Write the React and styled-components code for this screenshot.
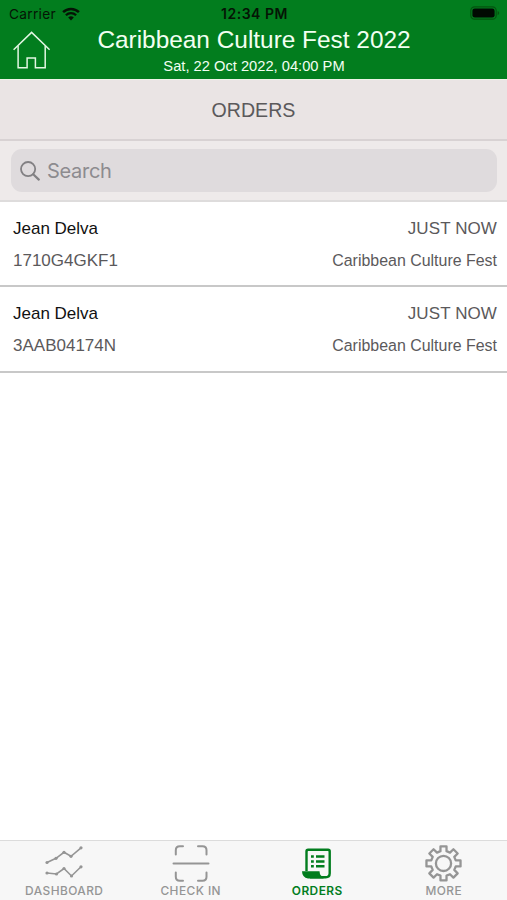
import React from "react";
import styled, { createGlobalStyle } from "styled-components";

const Colors = {
  green: "#027d1e",
  grey: "#959595",
  text: "#5b595b",
  line: "#c8c8c8",
};

const orders = [
  { name: "Jean Delva", code: "1710G4GKF1", time: "JUST NOW", event: "Caribbean Culture Fest" },
  { name: "Jean Delva", code: "3AAB04174N", time: "JUST NOW", event: "Caribbean Culture Fest" },
];

const WifiIcon = () => (
  <svg width="18" height="14" viewBox="0 0 18 14" fill="none" stroke="#051405">
    <path d="M1.1 5.1a11.4 11.4 0 0 1 15.8 0" strokeWidth="2.5" />
    <path d="M3.9 8.2a7.3 7.3 0 0 1 10.2 0" strokeWidth="2.3" />
    <path d="M9 13.4L6.2 10.6a4 4 0 0 1 5.6 0z" fill="#051405" stroke="none" />
  </svg>
);

const BatteryIcon = () => (
  <svg width="30" height="15" viewBox="0 0 30 15">
    <rect x="0.8" y="0.8" width="25.4" height="12.4" rx="3.8" fill="none" stroke="#04540f" strokeWidth="1.2" />
    <rect x="2.4" y="2.4" width="22.2" height="9.2" rx="2.4" fill="#010a02" />
    <path d="M27.6 5v4.2q1.6-.6 1.6-2.1T27.6 5z" fill="#04540f" />
  </svg>
);

const HomeIcon = () => (
  <svg width="38" height="38" viewBox="0 0 38 38" fill="none" stroke="#e3f6e3" strokeWidth="1.5">
    <path d="M.6 18.8L18.600 1.400l18 17.400" />
    <path d="M5.100 15v21.800h9V27h8.300v9.800h9.800V15" />
  </svg>
);

const SearchIcon = () => (
  <svg width="20" height="20" viewBox="0 0 20 20" fill="none" stroke="#828083" strokeWidth="1.8">
    <circle cx="8.1" cy="8.1" r="7.1" />
    <path d="M13.200 13.200l5.600 5.400" strokeWidth="2.2" strokeLinecap="round" />
  </svg>
);

const chartLines = [
  [[2, 17.5], [11, 13.3], [19, 7.3], [26, 11.3], [36, 2.8]],
  [[2, 28], [11.5, 29], [19, 23.5], [26.5, 31], [36, 21.8]],
];

const DashboardIcon = () => (
  <svg width="38" height="38" viewBox="0 0 38 38" fill="none" stroke="currentColor" strokeWidth="1.6">
    {chartLines.map((points, i) => (
      <g key={i}>
        <polyline points={points.join(" ")} />
        {points.map(([x, y]) => (
          <circle key={x} cx={x} cy={y} r="1.6" fill="currentColor" stroke="none" />
        ))}
      </g>
    ))}
  </svg>
);

const ScanIcon = () => (
  <svg width="38" height="38" viewBox="0 0 38 38" fill="none" stroke="currentColor" strokeWidth="2" strokeLinecap="round">
    <path d="M3.800 9.500V5.200q0-4 4-4H11M26 1.200h4.500q4 0 4 4v4.300M34.500 27.500v4.300q0 4-4 4H26M11 35.800H7.800q-4 0-4-4v-4.300" />
    <path d="M1.500 18.500h35" />
  </svg>
);

const OrdersIcon = () => (
  <svg width="38" height="38" viewBox="0 0 38 38" fill="none" stroke="currentColor">
    <path d="M8.500 26V6.400q0-1.600 1.600-1.600h20q1.600 0 1.600 1.600v21.800q0 4-4 4H12" strokeWidth="2.400" />
    <path d="M4 26.200h17.500q.2 2.600 1.200 4 1 1.400 2.800 1.600v1.600H10Q4.200 32.600 4 26.200z" fill="currentColor" stroke="none" />
    <path d="M13 11.500h2.800M13 16.400h2.800M13 21.300h2.800M18 11.500h8.500M18 16.400h8.500M18 21.300h8.500" strokeWidth="2.500" />
  </svg>
);

// Eight teeth around the hub, four corners for each tooth
const gearPoints = Array.from({ length: 8 }, (_, i) =>
  [[-14, 12.6], [-10, 17.3], [10, 17.3], [14, 12.6]].map(([offset, radius]) => {
    const angle = ((i * 45 + offset) * Math.PI) / 180;
    return `${(18.5 + radius * Math.sin(angle)).toFixed(2)},${(18.4 - radius * Math.cos(angle)).toFixed(2)}`;
  }).join(" ")
).join(" ");

const MoreIcon = () => (
  <svg width="38" height="38" viewBox="0 0 38 38" fill="none" stroke="currentColor" strokeWidth="2.3" strokeLinejoin="round">
    <polygon points={gearPoints} />
    <circle cx="18.5" cy="18.4" r="7.6" />
  </svg>
);

const tabs = [
  { label: "DASHBOARD", Icon: DashboardIcon },
  { label: "CHECK IN", Icon: ScanIcon },
  { label: "ORDERS", Icon: OrdersIcon, active: true },
  { label: "MORE", Icon: MoreIcon },
];

const App = () => {
  return (
    <Screen>
      <GlobalStyle />
      <Header>
        <StatusBar>
          <Carrier>
            Carrier
            <WifiIcon />
          </Carrier>
          <Clock>12:34 PM</Clock>
          <BatteryIcon />
        </StatusBar>
        <TitleRow>
          <HomeButton aria-label="Home">
            <HomeIcon />
          </HomeButton>
          <Titles>
            <Title>Caribbean Culture Fest 2022</Title>
            <Subtitle>Sat, 22 Oct 2022, 04:00 PM</Subtitle>
          </Titles>
        </TitleRow>
      </Header>
      <SectionTitle>ORDERS</SectionTitle>
      <SearchBar>
        <SearchField>
          <SearchIcon />
          <span>Search</span>
        </SearchField>
      </SearchBar>
      <OrderList>
        {orders.map((order) => (
          <OrderRow key={order.code}>
            <Line>
              <Name>{order.name}</Name>
              <Time>{order.time}</Time>
            </Line>
            <Line>
              <span>{order.code}</span>
              <EventName>{order.event}</EventName>
            </Line>
          </OrderRow>
        ))}
      </OrderList>
      <TabBar>
        {tabs.map(({ label, Icon, active }) => (
          <Tab key={label} $active={active}>
            <Icon />
            <TabLabel $active={active}>{label}</TabLabel>
          </Tab>
        ))}
      </TabBar>
    </Screen>
  );
};

export default App;

const GlobalStyle = createGlobalStyle`
  * {
    box-sizing: border-box;
  }
  body {
    margin: 0;
    background: white;
  }
  svg {
    display: block;
    flex-shrink: 0;
  }
`;
const Screen = styled.div`
  width: 100%;
  height: 100vh;
  display: flex;
  flex-direction: column;
  overflow: hidden;
  background: white;
  font-family: "Liberation Sans", Arial, sans-serif;
  white-space: nowrap;
`;
const Header = styled.header`
  height: 79px;
  flex-shrink: 0;
  background: ${Colors.green};
`;
const StatusBar = styled.div`
  height: 27px;
  padding: 0 7px 0 9px;
  display: grid;
  grid-template-columns: 1fr auto 1fr;
  align-items: center;
  color: #051405;
  font-family: Inter, sans-serif;
  font-size: 13.7px;

  > svg {
    justify-self: end;
  }
`;
const Carrier = styled.div`
  display: flex;
  align-items: center;
  gap: 6px;
  letter-spacing: 0.3px;
`;
const Clock = styled.div`
  font-size: 14px;
  font-weight: 600;
  letter-spacing: 0.5px;
`;
const TitleRow = styled.div`
  height: 52px;
  padding: 0 13px;
  display: grid;
  grid-template-columns: 38px 1fr 38px;
`;
const HomeButton = styled.button`
  width: 38px;
  height: 38px;
  margin-top: 4px;
  padding: 0;
  border: 0;
  background: none;
`;
const Titles = styled.div`
  padding-left: 1px;
  text-align: center;
  color: #f2fff2;
`;
const Title = styled.h1`
  margin: 0;
  font-size: 24.4px;
  font-weight: 400;
  line-height: 26px;
`;
const Subtitle = styled.div`
  font-size: 14.7px;
  line-height: 26px;
`;
const SectionTitle = styled.h2`
  height: 62px;
  flex-shrink: 0;
  margin: 0;
  border-top: 1px solid #eef4e8;
  border-bottom: 2px solid #d8d2d3;
  background: #eae4e4;
  color: ${Colors.text};
  font-size: 19.6px;
  font-weight: 400;
  line-height: 61px;
  text-align: center;
`;
const SearchBar = styled.div`
  height: 61px;
  flex-shrink: 0;
  padding: 8px 10px 9px 11px;
  border-bottom: 2px solid #dedcdc;
  background: #eeeaea;
`;
const SearchField = styled.div`
  height: 43px;
  padding-left: 9px;
  display: flex;
  align-items: center;
  gap: 7px;
  border-radius: 11px;
  background: #dfdbdd;
  color: #8d8b8f;
  font-family: Inter, sans-serif;
  font-size: 20px;
  letter-spacing: -0.3px;
`;
const OrderList = styled.main`
  flex: 1;
`;
const OrderRow = styled.article`
  height: 85.3px;
  padding: 11px 10px 0 13px;
  border-bottom: 2px solid ${Colors.line};
`;
const Line = styled.div`
  height: 32px;
  display: flex;
  align-items: center;
  justify-content: space-between;
  color: ${Colors.text};
  font-size: 17px;
`;
const Name = styled.span`
  color: #111;
`;
const Time = styled.span`
  font-size: 17px;
  letter-spacing: 0.1px;
`;
const EventName = styled.span`
  font-size: 15.95px;
`;
const TabBar = styled.nav`
  height: 60px;
  flex-shrink: 0;
  padding-left: 1px;
  display: grid;
  grid-template-columns: repeat(4, 1fr);
  border-top: 1px solid #dcdcdc;
  background: #f7f7f7;
`;
const Tab = styled.div`
  padding-top: 4px;
  display: flex;
  flex-direction: column;
  align-items: center;
  color: ${({ $active }) => ($active ? Colors.green : Colors.grey)};
`;
const TabLabel = styled.div`
  font-family: Inter, sans-serif;
  font-size: 11.9px;
  font-weight: ${({ $active }) => ($active ? 600 : 500)};
  line-height: 15px;
  letter-spacing: 0.45px;
`;
